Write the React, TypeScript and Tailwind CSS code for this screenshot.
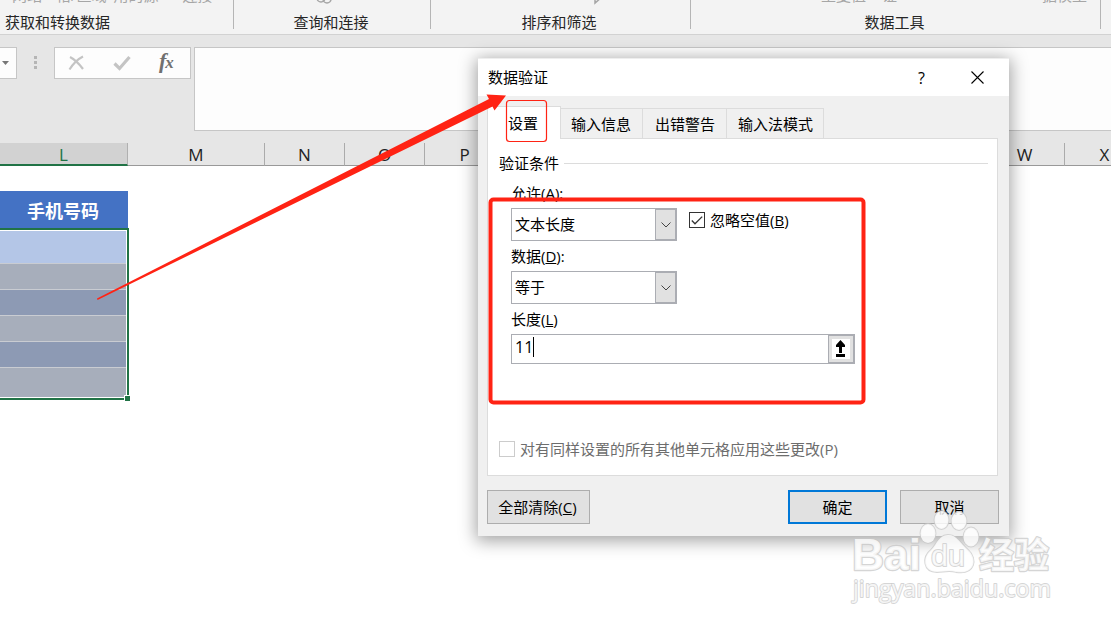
import React from "react";

const columns = [
  { name: "M", width: "w-[137px]" },
  { name: "N", width: "w-20" },
  { name: "O", width: "w-20" },
  { name: "P", width: "w-20" },
  { name: "Q", width: "w-20" },
  { name: "R", width: "w-20" },
  { name: "S", width: "w-20" },
  { name: "T", width: "w-20" },
  { name: "U", width: "w-20" },
  { name: "V", width: "w-20" },
  { name: "W", width: "w-20" },
  { name: "X", width: "w-20" },
];

const rows = [
  "h-8 bg-[#b4c6e7]",
  "h-[25px] bg-[#a7aebb]",
  "h-[25px] bg-[#8d9ab4]",
  "h-[25px] bg-[#a7aebb]",
  "h-[25px] bg-[#8d9ab4]",
  "h-[29px] bg-[#a7aebb]",
];

function Ribbon() {
  return (
    <div className="flex h-[35px] shrink-0 overflow-hidden border-b border-[#d2d2d2] bg-[#f3f3f3] text-[15px] text-[#262626]">
      <RibbonGroup className="w-[234px] border-r" label="获取和转换数据" labelClass="pl-[5px]">
        <div className="flex pl-3 whitespace-nowrap">
          <span>网站</span>
          <span className="ml-[14px]">格/区域</span>
          <span className="ml-[7px]">用的源</span>
          <span className="ml-6">连接</span>
        </div>
      </RibbonGroup>
      <RibbonGroup className="w-[197px] border-r" label="查询和连接" labelClass="pr-0.5 text-center">
        <svg className="ml-20 h-5 w-5" viewBox="0 0 20 20" fill="none" stroke="currentColor" strokeWidth="1.5">
          <circle cx="7" cy="13" r="4" />
          <circle cx="13" cy="14" r="4" />
        </svg>
      </RibbonGroup>
      <RibbonGroup className="w-[260px] border-r" label="排序和筛选" labelClass="pr-[3px] text-center">
        <svg className="ml-[162px] h-5 w-5" viewBox="0 0 20 20" fill="none" stroke="currentColor" strokeWidth="1.5">
          <path d="M2 18v-6l7 0z" />
        </svg>
      </RibbonGroup>
      <RibbonGroup className="w-[410px] border-r" label="数据工具" labelClass="pr-0.5 text-center">
        <div className="flex pl-[130px] whitespace-nowrap">
          <span>重复值</span>
          <span className="ml-4">证</span>
          <span className="ml-[145px]">据模型</span>
        </div>
      </RibbonGroup>
    </div>
  );
}

type RibbonGroupProps = {
  className: string;
  label: string;
  labelClass: string;
  children: React.ReactNode;
};

function RibbonGroup({ className, label, labelClass, children }: RibbonGroupProps) {
  return (
    <div className={`mb-[5px] flex h-[29px] shrink-0 flex-col justify-end border-[#b5b5b5] ${className}`}>
      <div className="mb-[7px] h-5 shrink-0 leading-5 text-[#a6a6a6]">{children}</div>
      <div className={`-mb-[3px] h-5 shrink-0 leading-5 ${labelClass}`}>{label}</div>
    </div>
  );
}

function FormulaBar() {
  return (
    <div className="flex h-[108px] shrink-0 items-start bg-[#e6e6e6] pt-3">
      <div className="flex h-8 w-[17px] items-center border border-l-0 border-[#c6c6c6] bg-[#fdfdfd]">
        <svg className="ml-0.5 h-1 w-[7px]" viewBox="0 0 7 4">
          <path d="M0 0h7L3.500 4z" fill="#777" />
        </svg>
      </div>
      <div className="ml-[17px] flex h-[30px] w-[3px] flex-col justify-center gap-0.5">
        <i className="h-[3px] bg-[#b5b5b5]" />
        <i className="h-[3px] bg-[#b5b5b5]" />
        <i className="h-[3px] bg-[#b5b5b5]" />
      </div>
      <div className="ml-[17px] flex h-8 w-[137px] items-center border border-[#c6c6c6] bg-[#fdfdfd]">
        <svg className="ml-[13px] h-4 w-[17px]" viewBox="0 0 17 16" fill="none" stroke="#c4c4c4" strokeWidth="2.200">
          <path d="M2 2c4 2 10 8 13 12M15 1.500C10 4 5 9 1.500 14.500" />
        </svg>
        <svg className="ml-7 h-4 w-[18px]" viewBox="0 0 18 16" fill="none" stroke="#c4c4c4" strokeWidth="3.200">
          <path d="M1.500 8.500l5 5L16.500 2" />
        </svg>
        <span className="-mt-0.5 ml-7 font-['Liberation_Serif',serif] text-[22px] leading-6 font-bold text-[#707070] italic">
          f<span className="-ml-px text-[17px]">x</span>
        </span>
      </div>
      <div className="ml-[3px] h-[84px] flex-1 border border-r-0 border-[#c6c6c6] bg-[#fdfdfd]" />
    </div>
  );
}

function Sheet() {
  return (
    <div className="flex-1 bg-white">
      <div className="flex h-[23px] w-[1300px] text-[17px] leading-[24px] text-[#222]">
        <div className="w-32 border-r border-b-2 border-r-[#b0b0b0] border-b-[#217346] bg-[#d2d2d2] text-center text-[#217346]">L</div>
        {columns.map((col) => (
          <div key={col.name} className={`shrink-0 border-r border-b border-r-[#ababab] border-b-[#999] bg-[#e6e6e6] text-center ${col.width}`}>
            {col.name}
          </div>
        ))}
      </div>
      <div className="mt-[25px] w-[129px]">
        <div className="h-[37px] w-32 bg-[#4472c4] pr-0.5 text-center text-[18px] leading-[40px] font-bold text-white">手机号码</div>
        <div className="relative h-[172px] border-2 border-l-0 border-[#217346] bg-white pt-px pr-px">
          <div className="flex flex-col gap-px bg-[#c9ccd2]">
            {rows.map((row, i) => (
              <div key={i} className={row} />
            ))}
          </div>
          <i className="absolute -right-[4px] -bottom-[4px] h-[7px] w-[7px] border border-white bg-[#217346]" />
        </div>
      </div>
    </div>
  );
}

function Select({ value }: { value: string }) {
  return (
    <div className="flex h-[33px] w-[166px] border border-[#abadb3] bg-white">
      <span className="flex-1 pl-[3px] leading-[31px]">{value}</span>
      <span className="flex w-[21px] items-center justify-center border border-[#abadb3] bg-[#e1e1e1]">
        <svg className="h-[6px] w-[10px]" viewBox="0 0 10 6" fill="none" stroke="#444">
          <path d="M.5.5L5 5 9.500.5" />
        </svg>
      </span>
    </div>
  );
}

function ValidationForm() {
  return (
    <div className="h-[338px] border border-[#dcdcdc] bg-white">
      <div className="flex h-6 items-center pt-6 pr-[9px] pl-[11px]">
        <span>验证条件</span>
        <i className="ml-[5px] h-px flex-1 bg-[#dcdcdc]" />
      </div>
      <div className="pt-[19px] pl-[23px]">
        <div className="h-[26px] leading-[22px]">允许(<u>A</u>):</div>
        <div className="flex">
          <Select value="文本长度" />
          <label className="ml-3 flex h-6 items-center">
            <span className="flex h-4 w-4 items-center justify-center border border-[#333]">
              <svg className="h-[9px] w-3" viewBox="0 0 12 9" fill="none" stroke="#333" strokeWidth="1.300">
                <path d="M.8 4.500L4 7.800 11.200.6" />
              </svg>
            </span>
            <span className="ml-[5px]">忽略空值(<u>B</u>)</span>
          </label>
        </div>
        <div className="h-[30px] leading-[31px]">数据(<u>D</u>):</div>
        <Select value="等于" />
        <div className="h-[30px] leading-[31px]">长度(<u>L</u>)</div>
        <div className="flex h-[30px] w-[344px] border border-[#abadb3]">
          <span className="pl-[3px] text-[16px] leading-[25px]">11</span>
          <i className="mt-0.5 h-5 w-px bg-black" />
          <span className="ml-auto flex w-[26px] items-center justify-center border border-[#abadb3] bg-[#e1e1e1]">
            <svg className="h-5 w-[18px] bg-white" viewBox="0 0 18 20">
              <path d="M7 14V8H4V6L8.500 1 13 6v2h-3v6zM4 15h9v3H4z" fill="#000" />
            </svg>
          </span>
        </div>
      </div>
      <label className="mt-[73px] flex h-6 items-center pl-[11px] text-[#6d6d6d]">
        <i className="h-4 w-4 border border-[#ccc]" />
        <span className="ml-[5px]">对有同样设置的所有其他单元格应用这些更改(P)</span>
      </label>
    </div>
  );
}

function Dialog() {
  return (
    <div className="absolute top-[58px] left-[478px] flex h-[478px] w-[531px] flex-col bg-[#f0f0f0] text-[15px] text-black shadow-[0_3px_16px_2px_rgba(0,0,0,0.36)]">
      <div className="flex h-[38px] items-center border-t border-[#eee] bg-white pl-[10px]">
        <span>数据验证</span>
        <span className="ml-auto text-[16px]">?</span>
        <svg className="mr-[25px] ml-[46px] h-[13px] w-[13px]" viewBox="0 0 13 13" stroke="#000" strokeWidth="1.100">
          <path d="M.5.5l12 12M12.500.5l-12 12" />
        </svg>
      </div>
      <div className="pt-[10px] pr-[11px] pl-[9px]">
        <div className="flex h-8 items-end leading-[31px]">
          <div className="relative z-10 -mb-px h-[33px] w-[74px] border border-b-0 border-[#dcdcdc] bg-white pl-5 leading-[33px]">设置</div>
          <div className="h-[30px] w-[82px] border-t border-r border-[#dcdcdc] pl-[10px]">输入信息</div>
          <div className="h-[30px] w-[84px] border-t border-r border-[#dcdcdc] pl-px text-center">出错警告</div>
          <div className="h-[30px] w-[97px] border-t border-r border-[#dcdcdc] pl-px text-center">输入法模式</div>
        </div>
        <ValidationForm />
        <div className="mt-[14px] flex h-[34px] text-center">
          <button className="w-[103px] shrink-0 border border-[#adadad] bg-[#e1e1e1] pr-0.5 leading-8">全部清除(<u>C</u>)</button>
          <button className="ml-[198px] w-[99px] shrink-0 border-2 border-[#0078d7] bg-[#e1e1e1] leading-[30px]">确定</button>
          <button className="ml-[13px] w-[99px] shrink-0 border border-[#adadad] bg-[#e1e1e1] leading-8">取消</button>
        </div>
      </div>
    </div>
  );
}

function Annotations() {
  return (
    <svg className="absolute inset-0 z-20 h-[628px] w-[1111px]" viewBox="0 0 1111 628">
      <path d="M97 298.500L489 99 486.500 94.500 506 95.500 494.500 110.500 492.500 106.500 97.500 300z" fill="#ff2314" />
      <rect x="506.500" y="100.500" width="40" height="41" rx="3" fill="none" stroke="#ff2314" strokeWidth="1.200" />
      <rect x="490.500" y="199.500" width="373" height="203" rx="3" fill="none" stroke="#ff2314" strokeWidth="4" />
    </svg>
  );
}

function Watermark() {
  return (
    <svg className="absolute top-[505px] left-[845px] z-20 h-[105px] w-[215px]" viewBox="0 0 215 105">
      <g fill="#fff" fillOpacity="0.800" stroke="#c8c8c8" strokeOpacity="0.750" strokeWidth="1.800" strokeLinejoin="round" paintOrder="stroke">
        <ellipse cx="96.500" cy="15" rx="7" ry="9" />
        <ellipse cx="114" cy="16" rx="7.500" ry="9" />
        <ellipse cx="83" cy="28.500" rx="7.500" ry="9.500" />
        <ellipse cx="126" cy="32" rx="7.500" ry="9.500" />
        <path d="M103 30c-9 0-11 9-17 15-9 7-8 22 6 22 6 0 12-2 19 0 19 3 22-13 12-22-8-7-11-15-20-15z" />
        <text x="7" y="65" strokeWidth="2.500" className="font-['Liberation_Sans',sans-serif] text-[45px] font-bold" textLength="69" lengthAdjust="spacingAndGlyphs">Bai</text>
        <text x="86" y="61" className="font-['Liberation_Sans',sans-serif] text-[29px]" textLength="34" lengthAdjust="spacingAndGlyphs">du</text>
        <text x="134" y="63" strokeWidth="2.500" className="font-['Noto_Sans_CJK_SC',sans-serif] text-[35px] font-bold" textLength="70" lengthAdjust="spacingAndGlyphs">经验</text>
        <text x="8" y="92" className="font-['Open_Sans',sans-serif] text-[23px]" textLength="198" lengthAdjust="spacingAndGlyphs">jingyan.baidu.com</text>
      </g>
    </svg>
  );
}

export default function App() {
  return (
    <div className="relative flex h-[628px] w-[1111px] flex-col overflow-hidden bg-white font-['Open_Sans','Noto_Sans_CJK_SC',sans-serif]">
      <Ribbon />
      <FormulaBar />
      <Sheet />
      <Dialog />
      <Annotations />
      <Watermark />
    </div>
  );
}
